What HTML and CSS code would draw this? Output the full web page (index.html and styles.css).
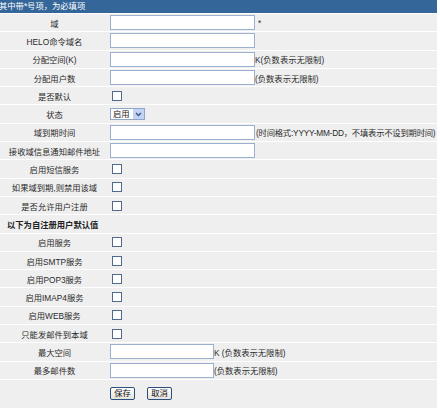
FILE: index.html
```html
<!DOCTYPE html>
<html lang="zh-CN">
<head>
<meta charset="utf-8">
<title>域设置</title>
<link rel="stylesheet" href="styles.css">
</head>
<body>
<div class="form">
  <div class="hd">其中带*号项，为必填项</div>
  <div class="row"><div class="lbl">域</div><div class="val"><input class="txt" type="text"><span class="note star">*</span></div></div>
  <div class="row"><div class="lbl">HELO命令域名</div><div class="val"><input class="txt" type="text"></div></div>
  <div class="row"><div class="lbl">分配空间(K)</div><div class="val"><input class="txt" type="text"><span class="note">K(负数表示无限制)</span></div></div>
  <div class="row"><div class="lbl">分配用户数</div><div class="val"><input class="txt" type="text"><span class="note">(负数表示无限制)</span></div></div>
  <div class="row"><div class="lbl">是否默认</div><div class="val"><input class="cb" type="checkbox"></div></div>
  <div class="row"><div class="lbl">状态</div><div class="val">
    <div class="sel"><span class="sel-text">启用</span><span class="sel-btn"><svg width="7" height="5" viewBox="0 0 7 5"><path d="M1 1 L3.5 3.5 L6 1" fill="none" stroke="#3b5682" stroke-width="1.4"/></svg></span></div>
  </div></div>
  <div class="row"><div class="lbl">域到期时间</div><div class="val"><input class="txt" type="text"><span class="note tight">(时间格式:YYYY-MM-DD，不填表示不设到期时间)</span></div></div>
  <div class="row"><div class="lbl">接收域信息通知邮件地址</div><div class="val"><input class="txt" type="text"></div></div>
  <div class="row"><div class="lbl">启用短信服务</div><div class="val"><input class="cb" type="checkbox"></div></div>
  <div class="row"><div class="lbl">如果域到期,则禁用该域</div><div class="val"><input class="cb" type="checkbox"></div></div>
  <div class="row"><div class="lbl">是否允许用户注册</div><div class="val"><input class="cb" type="checkbox"></div></div>
  <div class="row section">以下为自注册用户默认值</div>
  <div class="row"><div class="lbl">启用服务</div><div class="val"><input class="cb" type="checkbox"></div></div>
  <div class="row"><div class="lbl">启用SMTP服务</div><div class="val"><input class="cb" type="checkbox"></div></div>
  <div class="row"><div class="lbl">启用POP3服务</div><div class="val"><input class="cb" type="checkbox"></div></div>
  <div class="row"><div class="lbl">启用IMAP4服务</div><div class="val"><input class="cb" type="checkbox"></div></div>
  <div class="row"><div class="lbl">启用WEB服务</div><div class="val"><input class="cb" type="checkbox"></div></div>
  <div class="row"><div class="lbl">只能发邮件到本域</div><div class="val"><input class="cb" type="checkbox"></div></div>
  <div class="row"><div class="lbl">最大空间</div><div class="val"><input class="txt short" type="text"><span class="note">K (负数表示无限制)</span></div></div>
  <div class="row"><div class="lbl">最多邮件数</div><div class="val"><input class="txt short" type="text"><span class="note">(负数表示无限制)</span></div></div>
  <div class="row buttons"><div class="lbl"></div><div class="val"><button class="btn" type="button">保存</button><button class="btn" type="button">取消</button></div></div>
</div>
</body>
</html>
```
FILE: styles.css
```css
html, body {
  margin: 0;
  padding: 0;
  background: #ffffff;
}
body {
  font-family: "Liberation Sans", "Noto Sans CJK SC", sans-serif;
  font-size: 8.3px;
  color: #2a2a2a;
  overflow: hidden;
}
.form {
  width: 437px;
  display: flex;
  flex-direction: column;
  gap: 1px;
  background: #ffffff;
}
.hd {
  height: 13px;
  line-height: 13px;
  background: #356699;
  color: #ffffff;
  white-space: nowrap;
  margin-left: -1px;
}
.row {
  height: 17.3px;
  display: flex;
  align-items: center;
  background: #efefef;
  white-space: nowrap;
}
.lbl {
  width: 109px;
  flex: none;
  text-align: center;
}
.val {
  display: flex;
  align-items: center;
  padding-left: 1px;
}
.txt {
  width: 145px;
  height: 15px;
  box-sizing: border-box;
  margin: 0;
  padding: 0;
  border: 1px solid #9bb0cf;
  background: #ffffff;
  font: inherit;
}
.txt.short {
  width: 104px;
}
.note {
  margin-left: 0;
}
.note.tight {
  margin-left: 1px;
  letter-spacing: -0.2px;
}
.star {
  margin-left: 3px;
}
.cb {
  appearance: none;
  -webkit-appearance: none;
  width: 10px;
  height: 10px;
  box-sizing: border-box;
  margin: 0 0 0 2px;
  border: 1px solid #50698c;
  background: #ffffff;
}
.sel {
  display: flex;
  align-items: stretch;
  width: 35px;
  height: 12px;
  box-sizing: border-box;
  border: 1px solid #8ea6c8;
  background: #ffffff;
}
.sel-text {
  flex: 1;
  line-height: 10px;
  padding-left: 2px;
  color: #222;
}
.sel-btn {
  width: 11px;
  display: flex;
  align-items: center;
  justify-content: center;
  background: #c3d3f6;
}
.section {
  font-weight: bold;
  padding-left: 7px;
  color: #222;
}
.buttons {
  height: 28px;
}
.btn {
  width: 25px;
  height: 13px;
  box-sizing: border-box;
  margin: 0 12px 0 0;
  padding: 0;
  border: 1px solid #2a4f7d;
  border-radius: 2px;
  background: linear-gradient(#ffffff, #e4e3dc);
  font: inherit;
  color: #111;
  line-height: 11px;
}
```
